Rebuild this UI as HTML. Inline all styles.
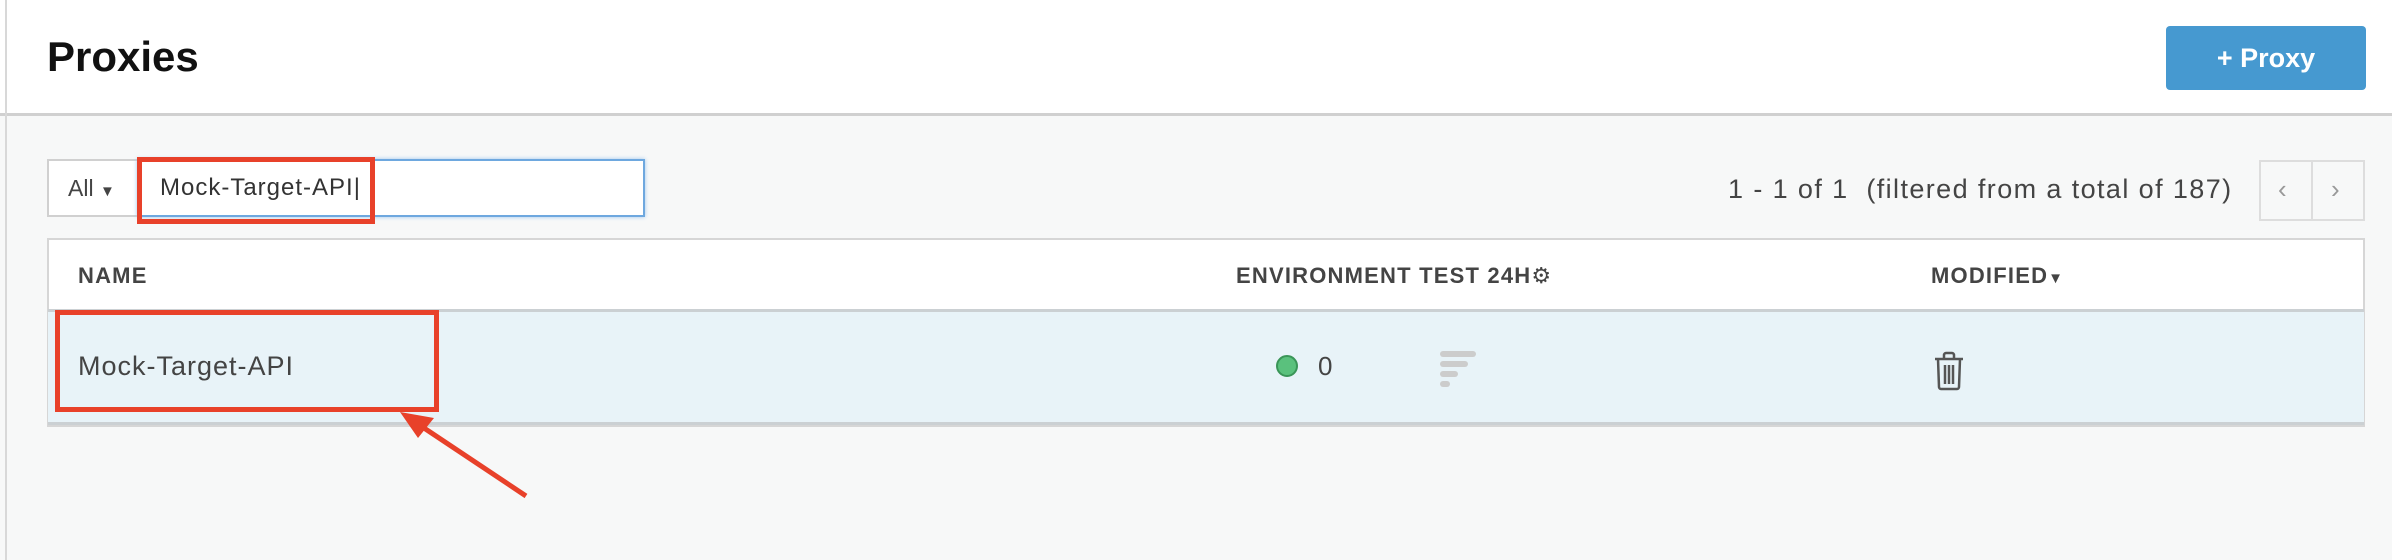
<!DOCTYPE html>
<html><head><style>
*{margin:0;padding:0;box-sizing:border-box}
body{width:2392px;height:560px;background:#f7f8f8;font-family:"Liberation Sans",sans-serif;position:relative;overflow:hidden;color:#444}
.a{position:absolute}
</style></head><body>
<div class="a" style="left:0;top:0;width:2392px;height:116px;background:#fff;border-bottom:3px solid #d0d0d0"></div>
<div class="a" style="left:5px;top:0;width:2px;height:560px;background:#d8d8d8"></div>
<div class="a" style="left:47px;top:33px;font-size:42px;font-weight:bold;color:#111">Proxies</div>
<div class="a" style="left:2166px;top:26px;width:200px;height:64px;background:#4699d0;border-radius:4px;color:#fff;font-size:27px;font-weight:bold;line-height:64px;text-align:center">+ Proxy</div>

<div class="a" style="left:47px;top:159px;width:92px;height:58px;background:#fff;border:2px solid #d0d0d0"></div>
<div class="a" style="left:68px;top:175px;font-size:23px;color:#444">All <span style="font-size:15px">&#9660;</span></div>
<div class="a" style="left:137px;top:159px;width:508px;height:58px;background:#fff;border:2px solid #6ea8df;box-shadow:0 0 4px #9cc6ee"></div>
<div class="a" style="left:160px;top:174px;font-size:24px;letter-spacing:1px;color:#333">Mock-Target-API<span style="font-weight:normal">|</span></div>
<div class="a" style="left:137px;top:157px;width:238px;height:67px;border:5px solid #e8412a"></div>

<div class="a" style="left:1728px;top:174px;font-size:27px;letter-spacing:1.4px;color:#444;white-space:pre">1 - 1 of 1  (filtered from a total of 187)</div>
<div class="a" style="left:2259px;top:160px;width:106px;height:61px;border:2px solid #ddd;background:#f7f8f8"></div>
<div class="a" style="left:2311px;top:160px;width:2px;height:61px;background:#ddd"></div>
<div class="a" style="left:2278px;top:174px;font-size:26px;color:#999">&#8249;</div>
<div class="a" style="left:2331px;top:174px;font-size:26px;color:#999">&#8250;</div>

<div class="a" style="left:47px;top:238px;width:2318px;height:189px;background:#fff;border:2px solid #d6d6d6"></div>
<div class="a" style="left:78px;top:263px;font-size:22px;letter-spacing:1.2px;font-weight:bold;color:#444">NAME</div>
<div class="a" style="left:1236px;top:263px;font-size:22px;letter-spacing:1.2px;font-weight:bold;color:#444">ENVIRONMENT TEST 24H<span style="font-weight:normal">&#9881;</span></div>
<div class="a" style="left:1931px;top:263px;font-size:22px;letter-spacing:1.2px;font-weight:bold;color:#444">MODIFIED<span style="font-size:15px">&#9660;</span></div>
<div class="a" style="left:48px;top:309px;width:2316px;height:116px;background:#e8f3f8;border-top:3px solid #cbd0d3;border-bottom:3px solid #cbd0d3"></div>
<div class="a" style="left:78px;top:351px;font-size:27px;letter-spacing:1px;color:#444">Mock-Target-API</div>
<div class="a" style="left:55px;top:310px;width:384px;height:102px;border:5px solid #e8412a"></div>
<div class="a" style="left:1276px;top:355px;width:22px;height:22px;border-radius:50%;background:#5ac17d;border:2px solid #3a9558"></div>
<div class="a" style="left:1318px;top:351px;font-size:26px;color:#444">0</div>
<div class="a" style="left:1440px;top:351px;width:36px;height:6px;background:#ccc;border-radius:3px"></div>
<div class="a" style="left:1440px;top:361px;width:28px;height:6px;background:#ccc;border-radius:3px"></div>
<div class="a" style="left:1440px;top:371px;width:18px;height:6px;background:#ccc;border-radius:3px"></div>
<div class="a" style="left:1440px;top:381px;width:10px;height:6px;background:#ccc;border-radius:3px"></div>
<svg class="a" style="left:1933px;top:351px" width="32" height="40" viewBox="0 0 32 40" fill="none" stroke="#555" stroke-width="2.5">
<path d="M2 8H30M11 8V4a2 2 0 0 1 2-2h6a2 2 0 0 1 2 2v4M5 8l1 28a2 2 0 0 0 2 2h16a2 2 0 0 0 2-2l1-28M12 14v19M16 14v19M20 14v19"/></svg>
<svg class="a" style="left:390px;top:400px" width="150" height="110"><path d="M136 96L22 20" stroke="#e8412a" stroke-width="5"/><path d="M10 12L44 18L28 38Z" fill="#e8412a"/></svg>
</body></html>
